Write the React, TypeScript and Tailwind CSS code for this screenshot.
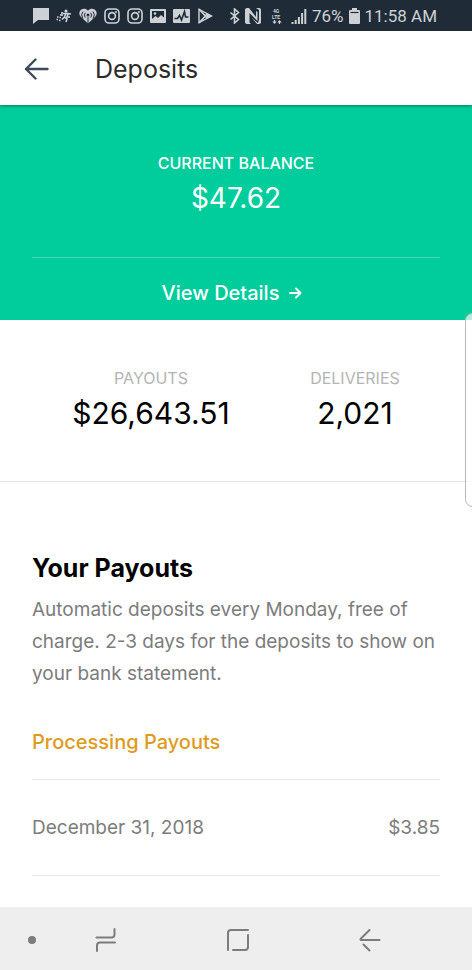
import type { ReactNode } from "react";

const payouts = [{ date: "December 31, 2018", amount: "$3.85" }];

function StatusIcon({ children, width = 16 }: { children: ReactNode; width?: number }) {
  return (
    <svg width={width} height="16" viewBox={`0 0 ${width} 16`} fill="none" className="shrink-0" aria-hidden>
      {children}
    </svg>
  );
}

function InstagramIcon() {
  return (
    <StatusIcon>
      <rect x="1" y="1" width="14" height="14" rx="4" stroke="currentColor" strokeWidth="1.6" />
      <circle cx="8" cy="8" r="3.4" stroke="currentColor" strokeWidth="1.6" />
      <circle cx="12" cy="4" r="1" fill="currentColor" />
    </StatusIcon>
  );
}

function StatusBar() {
  return (
    <div className="flex h-[31px] items-center bg-[#1f2c38] pr-[35px] pl-[33px] font-['Roboto',sans-serif] text-[#cdd1d5]">
      <div className="flex items-center gap-[7px]">
        {/* message */}
        <StatusIcon>
          <path d="M0 0h16v12H5l-5 4z" fill="currentColor" />
        </StatusIcon>
        {/* courier */}
        <StatusIcon>
          <circle cx="10" cy="3" r="1.6" fill="currentColor" />
          <path
            d="M7 5.5h5l3 .5M10 5l-1.5 4L11 11l-1 3M8.5 9L6 11.5M6 4v4M12 6l-1 3h3"
            stroke="currentColor"
            strokeWidth="1.6"
          />
          <path d="M4 7h1.5M1 9h1.5M3.5 9.5H5M.5 11.5H2M3 12.5h1.5" stroke="currentColor" strokeWidth="1.3" />
        </StatusIcon>
        {/* radio */}
        <StatusIcon width={18}>
          <path
            d="M9 15.5L2 9C.3 7.3 0 5.3.7 3.5 2.2.2 6.5-.2 9 2.7 11.5-.2 15.8.2 17.3 3.5 18 5.3 17.7 7.3 16 9z"
            fill="currentColor"
          />
          <circle cx="9" cy="7" r="1.5" fill="#1f2c38" />
          <path
            d="M9 9v7M6.3 4.7q-1.8 2.3 0 4.8M11.7 4.7q1.8 2.3 0 4.8M4 3.5Q1.2 7 4 10.5M14 3.5q2.8 3.5 0 7"
            stroke="#1f2c38"
            strokeWidth="1"
          />
        </StatusIcon>
        <InstagramIcon />
        <InstagramIcon />
        {/* gallery */}
        <StatusIcon>
          <path
            fillRule="evenodd"
            d="M1 1h14q1 0 1 1v12q0 1-1 1H1q-1 0-1-1V2q0-1 1-1zm1 2v8l3.5-3L8 10l3-3 3 2.5V3z"
            fill="currentColor"
          />
          <circle cx="5" cy="5.5" r="1.3" fill="currentColor" />
        </StatusIcon>
        {/* activity */}
        <StatusIcon width={17}>
          <rect y="1" width="17" height="14" rx="1" fill="currentColor" />
          <path d="M1.5 10.5h3l2-3 2 4.5 3-8.5 1 5.5h3" stroke="#1f2c38" strokeWidth="1.6" />
        </StatusIcon>
        {/* play store */}
        <StatusIcon>
          <path d="M2 1.5v13L14.5 8z" stroke="currentColor" strokeWidth="1.4" />
          <path d="M2 1l8 9M2 15l8-9" stroke="currentColor" strokeWidth="1.6" />
          <path d="M10 5l5 3-5 3-2-3z" fill="currentColor" />
        </StatusIcon>
      </div>

      <div className="ml-auto flex items-center gap-[5px]">
        {/* bluetooth */}
        <StatusIcon width={11}>
          <path d="M1.5 4.5l8 7L5.5 15V1l4 3.5-8 7" stroke="currentColor" strokeWidth="1.6" />
        </StatusIcon>
        {/* nfc */}
        <StatusIcon>
          <path d="M2 0h2l7 9V3l1.5 1v9L4.5 5v9.5L6 16H2q-2 0-2-2V2q0-2 2-2z" fill="currentColor" />
          <path d="M14 16h-2L6.5 9.5 12.8 15 14 12V2l-3-2h3q2 0 2 2v12q0 2-2 2z" fill="currentColor" />
        </StatusIcon>
        {/* mobile data */}
        <StatusIcon width={20}>
          <text x="7" y="5" fill="currentColor" fontSize="5" fontWeight="700">
            4G
          </text>
          <text x="6" y="11" fill="currentColor" fontSize="5" fontWeight="700">
            LTE
          </text>
          <path d="M8.5 12v2M13.5 16v-2" stroke="currentColor" strokeWidth="1.2" />
          <path d="M6.3 13.5h4.4l-2.2 2.5zM11.3 14.5h4.4l-2.2-2.5z" fill="currentColor" />
        </StatusIcon>
        {/* signal */}
        <StatusIcon>
          <path d="M1.5 16v-2M4.7 16v-4M7.9 16V9M11.1 16V5M14.3 16V1" stroke="currentColor" strokeWidth="2" />
        </StatusIcon>
        <span className="text-[17px] leading-6">76%</span>
        {/* battery */}
        <StatusIcon width={11}>
          <path d="M3 0h5v2h2q1 0 1 1v12q0 1-1 1H1q-1 0-1-1V3q0-1 1-1h2z" fill="currentColor" />
          <path d="M1.5 4.5h8" stroke="#1f2c38" strokeWidth="1.2" />
        </StatusIcon>
        <span className="text-[17px] leading-6">11:58 AM</span>
      </div>
    </div>
  );
}

function Header() {
  return (
    <header className="relative z-10 flex h-[74px] items-center gap-[46px] bg-white px-6 pt-px shadow-[0_1px_3px_rgba(0,0,0,0.4)]">
      <button type="button" aria-label="Back" className="text-[#3d4b59]">
        <svg width="25" height="22" viewBox="0 0 25 22" fill="none" aria-hidden>
          <path
            d="M23.5 11H2M11.5 1.5L2 11l9.5 9.5"
            stroke="currentColor"
            strokeWidth="2.4"
            strokeLinecap="round"
            strokeLinejoin="round"
          />
        </svg>
      </button>
      <h1 className="text-[25px] leading-8 text-[#2b2b2b]">Deposits</h1>
    </header>
  );
}

function Balance() {
  return (
    <section className="bg-[#00cd9b] px-8 text-center text-white">
      <div className="border-b border-white/25 pt-[46px] pb-10">
        <p className="text-[16px] leading-6 font-medium">CURRENT BALANCE</p>
        <p className="mt-1 text-[28px] leading-[38px]">$47.62</p>
      </div>
      <a href="#details" className="flex h-[62px] items-center justify-center gap-[10px] pt-2 pr-2 text-[20px] leading-6 font-medium">
        View Details
        <svg width="13" height="12" viewBox="0 0 13 12" fill="none" aria-hidden>
          <path
            d="M1 6h10.5M7 1.5L11.5 6 7 10.5"
            stroke="currentColor"
            strokeWidth="2"
            strokeLinecap="round"
            strokeLinejoin="round"
          />
        </svg>
      </a>
    </section>
  );
}

function Stat({ label, value }: { label: string; value: string }) {
  return (
    <div className="text-center">
      <p className="text-[16px] leading-6 text-[#b4b4b4]">{label}</p>
      <p className="mt-1 text-[30px] leading-[38px] text-black">{value}</p>
    </div>
  );
}

function NavBar() {
  return (
    <nav className="mt-auto flex h-[63px] items-center bg-[#eeeeee] pt-0.5 pr-9 pl-6 text-[#7c7c7c]">
      <button type="button" aria-label="Hide navigation bar" className="flex w-4 justify-center">
        <span className="size-2 rounded-full bg-current" />
      </button>
      <button type="button" aria-label="Recent apps" className="flex flex-1 justify-center">
        <svg width="22" height="26" viewBox="0 0 22 26" fill="none" stroke="currentColor" strokeWidth="2" strokeLinecap="round" aria-hidden>
          <path d="M1.5 10.5h15q3 0 3-3V2M20 15.5H5q-3 0-3 3V24" />
        </svg>
      </button>
      <button type="button" aria-label="Home" className="flex flex-1 justify-center">
        <svg width="22" height="22" viewBox="0 0 22 22" fill="none" stroke="currentColor" strokeWidth="2" strokeLinecap="round" aria-hidden>
          <path d="M1 21V4q0-3 3-3h17M21 6v12q0 3-3 3H6" />
        </svg>
      </button>
      <button type="button" aria-label="Back" className="flex flex-1 justify-center">
        <svg width="22" height="24" viewBox="0 0 22 24" fill="none" stroke="currentColor" strokeWidth="2" strokeLinecap="round" aria-hidden>
          <path d="M10.5 2L2 10.5q-1.5 1.5.5 1.5H20.5M4.5 16.5L10.5 22.5" />
        </svg>
      </button>
    </nav>
  );
}

export default function App() {
  return (
    <div className="relative flex min-h-screen flex-col overflow-hidden bg-white font-['Inter','Liberation_Sans',sans-serif]">
      <StatusBar />
      <Header />
      <Balance />

      <section className="flex justify-around border-b border-[#e4e4e4] px-8 pt-[46px] pb-[49px]">
        <Stat label="PAYOUTS" value="$26,643.51" />
        <Stat label="DELIVERIES" value="2,021" />
      </section>

      <section className="px-8 pt-[70px]">
        <h2 className="text-[25px] leading-8 font-bold text-black">Your Payouts</h2>
        <p className="mt-[10px] text-[19px] leading-8 text-[#7c7c7c]">
          Automatic deposits every Monday, free of charge. 2-3 days for the deposits to show on your bank statement.
        </p>
        <h3 className="mt-10 border-b border-[#e8e8e8] pb-[25px] text-[20px] leading-6 font-medium text-[#e09a20]">
          Processing Payouts
        </h3>
        <ul>
          {payouts.map((p) => (
            <li
              key={p.date}
              className="flex h-24 items-center justify-between border-b border-[#e8e8e8] text-[19px] leading-6 text-[#7c7c7c]"
            >
              <span>{p.date}</span>
              <span>{p.amount}</span>
            </li>
          ))}
        </ul>
      </section>

      <NavBar />

      {/* edge panel handle */}
      <div className="absolute top-[313px] -right-2 z-20 h-[194px] w-[15px] rounded-[8px] border border-[#b8b8b8] bg-white/70" />
    </div>
  );
}
